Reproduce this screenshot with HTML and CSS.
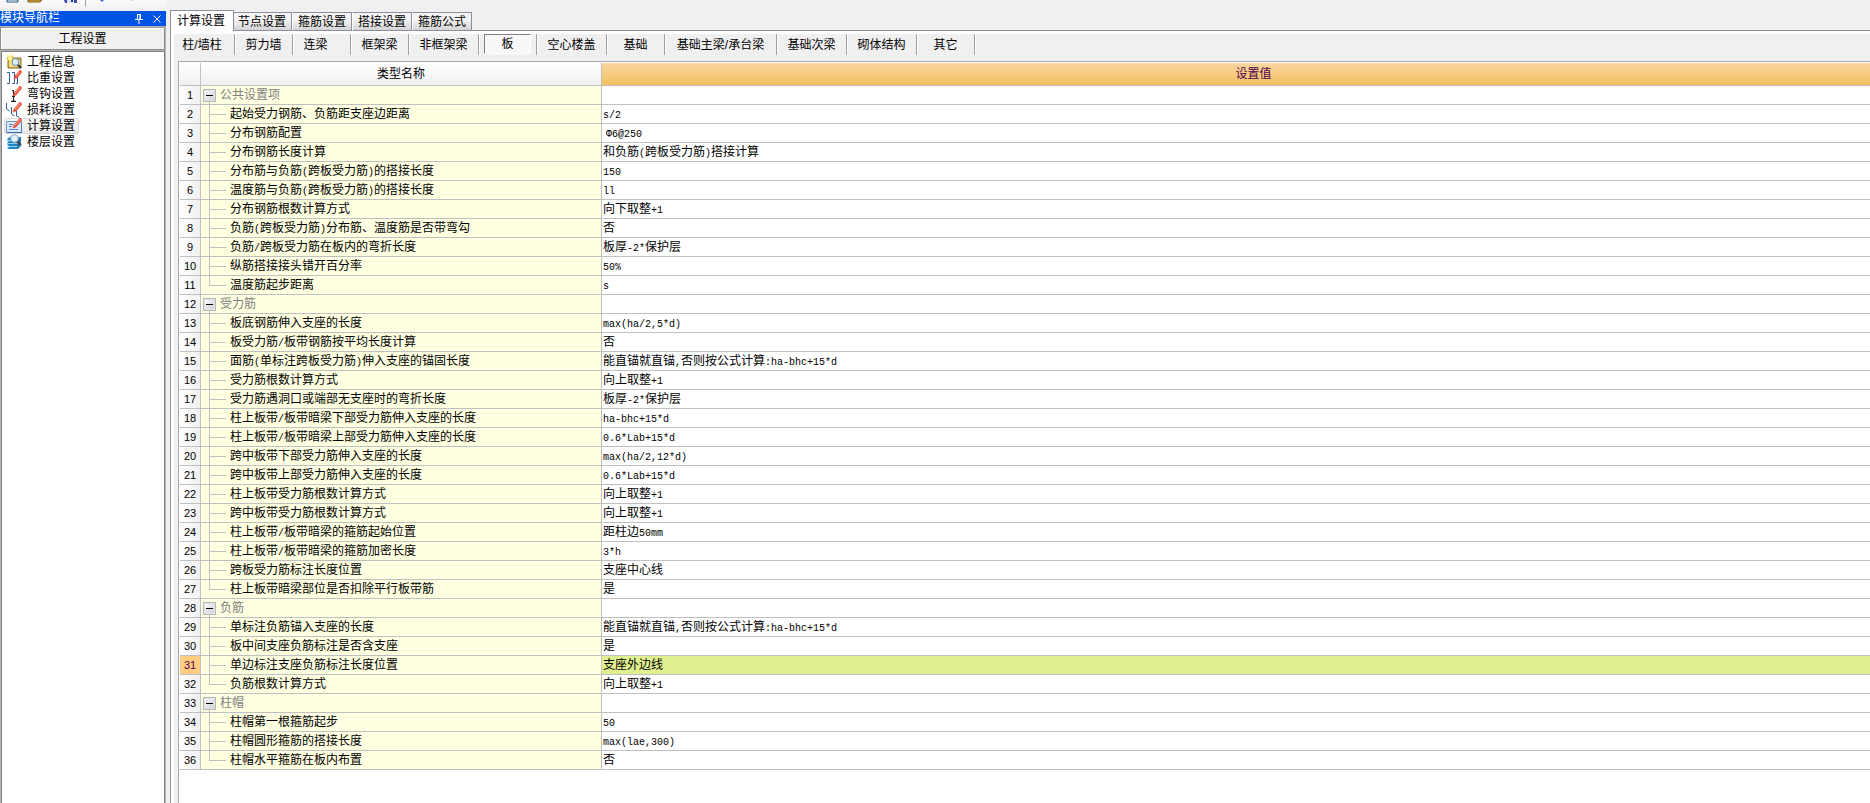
FILE: index.html
```html
<!DOCTYPE html>
<html lang="zh-CN">
<head>
<meta charset="utf-8">
<title>工程设置</title>
<link rel="stylesheet" href="styles.css">
</head>
<body>
<div class="app">
<aside class="side">
  <div class="toolbar">
    <svg class="strip" viewBox="0 0 166 8" aria-hidden="true">
      <path d="M7 0v2h11V0z" fill="#fff" stroke="#31577f"/><path d="M9 0h7v1H9z" fill="#9cc4dc"/>
      <path d="M28 0h12l2 0-2 2H28z" fill="#e8b640" stroke="#7a5a14"/>
      <path d="M64 0h13v3H65z" fill="#3d4fae"/><path d="M67 0h7v3h-7z" fill="#dfe4f6"/><path d="M71 0h2v2h-2z" fill="#27338a"/>
      <path d="M85.500 0v6.500" stroke="#a0a0a0"/>
      <path d="M100 0h4l-2 2z" fill="#3a6bd8"/><path d="M131 0h3l-1 1z" fill="#c4c4c8"/>
    </svg>
  </div>
  <header class="side-title">
    <h1>模块导航栏</h1>
    <button class="tbtn" aria-label="固定"><svg viewBox="0 0 8 10"><path d="M2 .5h4M2.500 0v5M5.500 0v5M4.800 0v5M0 5.500h8M4 6v4" stroke="#fff" fill="none"/></svg></button>
    <button class="tbtn" aria-label="关闭"><svg viewBox="0 0 8 8"><path d="M.5.5l7 7M7.500.5l-7 7" stroke="#fff" fill="none"/></svg></button>
  </header>
  <div class="side-body">
    <button class="group">工程设置</button>
    <nav class="list">
      <a class="item" href="#"><svg viewBox="0 0 16 16"><path d="M2 3h5l1 1h7v10H2z" fill="#e3b84f" stroke="#8d6a1e"/><path d="M3 6h11v7H3z" fill="#f7dc8a"/><path d="M4 0v9M0 4h9M1 1l6 6M7 1L1 7" stroke="#ffe14a"/><circle cx="4" cy="4" r="2" fill="#fff6a8"/><path d="M11 10l4 4" stroke="#30343c" stroke-width="2"/><circle cx="9.500" cy="8" r="3.500" fill="#d9edfb" stroke="#6989aa"/></svg>工程信息</a>
      <a class="item" href="#"><svg viewBox="0 0 16 16"><path d="M1 2.500h2.500v11H1M6 2.500h2.500v11H6M11.500 6v7.500H10" stroke="#315a9b" fill="none"/><path d="M9 6l5-6 2 2-5 6-3 1z" fill="#f2573f" stroke="#d43a28" stroke-width=".5"/><path d="M10 6l4-4.500" stroke="#ffad91"/></svg>比重设置</a>
      <a class="item" href="#"><svg viewBox="0 0 16 16"><path d="M6 4.500h2M7.500 5v10M5 15.300h5M6 10.500h3" stroke="#20232b" stroke-width="1.200" fill="none"/><path d="M8 7l6-7 2 2-6 7-3 1z" fill="#f2573f" stroke="#d43a28" stroke-width=".5"/><path d="M9 7l5-5.500" stroke="#ffad91"/></svg>弯钩设置</a>
      <a class="item" href="#"><svg viewBox="0 0 16 16"><path d="M.5 1v6l3 2M5.500 5v7l3 2M10.500 9v5l3 1.500" stroke="#315a9b" fill="none"/><path d="M8 7l6-7 2 2-6 7-3 1z" fill="#f2573f" stroke="#d43a28" stroke-width=".5"/><path d="M9 7l5-5.500" stroke="#ffad91"/></svg>损耗设置</a>
      <a class="item current" href="#" aria-current="page"><svg viewBox="0 0 16 16"><path d="M.5 3.500h15v11H.5z" fill="#d9e8fa" stroke="#6f98cc"/><path d="M1 14.500h15V5" stroke="#3467aa" fill="none"/><path d="M3 6.500h4M3 8.500h3M3 11.500h9" stroke="#5b87bd"/><path d="M8 7l6-7 2 2-6 7-3 1z" fill="#f2573f" stroke="#d43a28" stroke-width=".5"/><path d="M9 7l5-5.500" stroke="#ffad91"/></svg>计算设置</a>
      <a class="item" href="#"><svg viewBox="0 0 16 16"><path d="M1 5l3-2h11v9l-3 3H1l2-2H1l2-2H1l2-2H1l2-2z" fill="#2384c4"/><path d="M1 6.500h11M1 9.500h11M1 12.500h11" stroke="#8ed0f0"/><path d="M12 14V7l3-2" stroke="#145b91" fill="none"/><path d="M11 7l4 4" stroke="#4a3b35" stroke-width="2"/><circle cx="8.500" cy="4.500" r="3.800" fill="#e2f0f8" stroke="#8ba7b8"/></svg>楼层设置</a>
    </nav>
  </div>
</aside>
<main class="main">
  <div class="tabs" role="tablist">
    <button class="tab active" role="tab" aria-selected="true">计算设置</button>
    <button class="tab" role="tab">节点设置</button>
    <button class="tab" role="tab">箍筋设置</button>
    <button class="tab" role="tab">搭接设置</button>
    <button class="tab" role="tab">箍筋公式</button>
  </div>
  <div class="page">
    <div class="cats">
      <div class="cat"><button>柱/墙柱</button></div>
      <div class="cat"><button>剪力墙</button></div>
      <div class="cat"><button class="lead">连梁</button></div>
      <div class="cat"><button>框架梁</button></div>
      <div class="cat wide"><button>非框架梁</button></div>
      <div class="cat"><button class="pressed" aria-pressed="true">板</button></div>
      <div class="cat wide"><button>空心楼盖</button></div>
      <div class="cat"><button>基础</button></div>
      <div class="cat xwide"><button>基础主梁/承台梁</button></div>
      <div class="cat wide"><button>基础次梁</button></div>
      <div class="cat wide"><button>砌体结构</button></div>
      <div class="cat"><button>其它</button></div>
    </div>
    <div class="grid">
      <table>
        <colgroup><col class="c-num"><col class="c-name"><col></colgroup>
        <thead><tr><th></th><th>类型名称</th><th class="sel">设置值</th></tr></thead>
        <tbody>
          <tr class="sec"><th>1</th><td><button class="fold" aria-label="折叠"></button>公共设置项</td><td></td></tr>
          <tr><th>2</th><td>起始受力钢筋、负筋距支座边距离</td><td><code>s/2</code></td></tr>
          <tr><th>3</th><td>分布钢筋配置</td><td class="bar"><code>Φ6@250</code></td></tr>
          <tr><th>4</th><td>分布钢筋长度计算</td><td>和负筋<code>(</code>跨板受力筋<code>)</code>搭接计算</td></tr>
          <tr><th>5</th><td>分布筋与负筋<code>(</code>跨板受力筋<code>)</code>的搭接长度</td><td><code>150</code></td></tr>
          <tr><th>6</th><td>温度筋与负筋<code>(</code>跨板受力筋<code>)</code>的搭接长度</td><td><code>ll</code></td></tr>
          <tr><th>7</th><td>分布钢筋根数计算方式</td><td>向下取整<code>+1</code></td></tr>
          <tr><th>8</th><td>负筋<code>(</code>跨板受力筋<code>)</code>分布筋、温度筋是否带弯勾</td><td>否</td></tr>
          <tr><th>9</th><td>负筋<code>/</code>跨板受力筋在板内的弯折长度</td><td>板厚<code>-2*</code>保护层</td></tr>
          <tr><th>10</th><td>纵筋搭接接头错开百分率</td><td><code>50%</code></td></tr>
          <tr class="last"><th>11</th><td>温度筋起步距离</td><td><code>s</code></td></tr>
          <tr class="sec"><th>12</th><td><button class="fold" aria-label="折叠"></button>受力筋</td><td></td></tr>
          <tr><th>13</th><td>板底钢筋伸入支座的长度</td><td><code>max(ha/2,5*d)</code></td></tr>
          <tr><th>14</th><td>板受力筋<code>/</code>板带钢筋按平均长度计算</td><td>否</td></tr>
          <tr><th>15</th><td>面筋<code>(</code>单标注跨板受力筋<code>)</code>伸入支座的锚固长度</td><td>能直锚就直锚<code>,</code>否则按公式计算<code>:ha-bhc+15*d</code></td></tr>
          <tr><th>16</th><td>受力筋根数计算方式</td><td>向上取整<code>+1</code></td></tr>
          <tr><th>17</th><td>受力筋遇洞口或端部无支座时的弯折长度</td><td>板厚<code>-2*</code>保护层</td></tr>
          <tr><th>18</th><td>柱上板带<code>/</code>板带暗梁下部受力筋伸入支座的长度</td><td><code>ha-bhc+15*d</code></td></tr>
          <tr><th>19</th><td>柱上板带<code>/</code>板带暗梁上部受力筋伸入支座的长度</td><td><code>0.6*Lab+15*d</code></td></tr>
          <tr><th>20</th><td>跨中板带下部受力筋伸入支座的长度</td><td><code>max(ha/2,12*d)</code></td></tr>
          <tr><th>21</th><td>跨中板带上部受力筋伸入支座的长度</td><td><code>0.6*Lab+15*d</code></td></tr>
          <tr><th>22</th><td>柱上板带受力筋根数计算方式</td><td>向上取整<code>+1</code></td></tr>
          <tr><th>23</th><td>跨中板带受力筋根数计算方式</td><td>向上取整<code>+1</code></td></tr>
          <tr><th>24</th><td>柱上板带<code>/</code>板带暗梁的箍筋起始位置</td><td>距柱边<code>50mm</code></td></tr>
          <tr><th>25</th><td>柱上板带<code>/</code>板带暗梁的箍筋加密长度</td><td><code>3*h</code></td></tr>
          <tr><th>26</th><td>跨板受力筋标注长度位置</td><td>支座中心线</td></tr>
          <tr class="last"><th>27</th><td>柱上板带暗梁部位是否扣除平行板带筋</td><td>是</td></tr>
          <tr class="sec"><th>28</th><td><button class="fold" aria-label="折叠"></button>负筋</td><td></td></tr>
          <tr><th>29</th><td>单标注负筋锚入支座的长度</td><td>能直锚就直锚<code>,</code>否则按公式计算<code>:ha-bhc+15*d</code></td></tr>
          <tr><th>30</th><td>板中间支座负筋标注是否含支座</td><td>是</td></tr>
          <tr class="picked"><th>31</th><td>单边标注支座负筋标注长度位置</td><td>支座外边线</td></tr>
          <tr class="last"><th>32</th><td>负筋根数计算方式</td><td>向上取整<code>+1</code></td></tr>
          <tr class="sec"><th>33</th><td><button class="fold" aria-label="折叠"></button>柱帽</td><td></td></tr>
          <tr><th>34</th><td>柱帽第一根箍筋起步</td><td><code>50</code></td></tr>
          <tr><th>35</th><td>柱帽圆形箍筋的搭接长度</td><td><code>max(lae,300)</code></td></tr>
          <tr class="last"><th>36</th><td>柱帽水平箍筋在板内布置</td><td>否</td></tr>
        </tbody>
      </table>
    </div>
  </div>
</main>
</div>
</body>
</html>
```
FILE: styles.css
```css
* { box-sizing: border-box; }
body {
  margin: 0;
  background: #f0f0f0;
  color: #000;
  font: 12px/16px "Liberation Sans", "Noto Sans CJK SC", sans-serif;
  overflow: hidden;
}
button {
  margin: 0;
  padding: 0;
  border: 0;
  background: none;
  color: inherit;
  font: inherit;
}
.app { display: flex; gap: 4px; height: 100vh; }

/* navigation panel */
.side { display: flex; flex-direction: column; width: 166px; flex: none; }
.toolbar { height: 11px; background: linear-gradient(#fafafa, #f0f0f0); }
.strip { display: block; width: 166px; height: 8px; }
.side-title {
  display: flex;
  align-items: center;
  gap: 10px;
  height: 15px;
  padding-right: 5px;
  background: #0054e3;
  color: #fff;
}
.side-title h1 { flex: 1; margin: 0; font-size: 12px; line-height: 15px; font-weight: 400; }
.tbtn { display: flex; width: 8px; }
.tbtn svg { width: 8px; height: auto; }
.side-body {
  display: flex;
  flex: 1;
  flex-direction: column;
  gap: 1px;
  padding: 1px 1px 0 0;
  background: #b4b4b4;
}
.group {
  height: 23px;
  border: 1px solid #8c8c8c;
  border-top-color: #a0a0a0;
  background: #f0f0f0;
  box-shadow: inset 1px 1px #fff;
}
.list {
  flex: 1;
  margin-left: 1px;
  padding: 2px;
  border: solid #808080;
  border-width: 1px 1px 0;
  background: #fff;
}
.item {
  display: flex;
  align-items: center;
  gap: 5px;
  width: 75px;
  height: 16px;
  padding-left: 2px;
  border-radius: 3px;
  color: #000;
  text-decoration: none;
  white-space: nowrap;
}
.item svg { width: 16px; height: 16px; flex: none; }
.item.current {
  background: linear-gradient(#fafafa, #e6e6e6);
  box-shadow: inset 0 0 0 1px #d9d9d9;
}

/* tabs */
.main { display: flex; flex: 1; flex-direction: column; min-width: 0; }
.tabs {
  display: flex;
  align-items: flex-end;
  height: 31px;
  flex: none;
  box-shadow: inset 0 -1px #8e8e9c;
}
.tab {
  width: 60px;
  height: 19px;
  border: 1px solid #8e8e9c;
  border-left-color: #fff;
  background: linear-gradient(#f4f4f4 40%, #d4d4d4);
}
.tab.active {
  position: relative;
  width: 64px;
  height: 21px;
  margin-right: -2px;
  padding-right: 2px;
  border-color: #8e8e9c;
  border-bottom: 0;
  background: #fff;
}
.page {
  display: flex;
  flex: 1;
  flex-direction: column;
  padding: 3px 0 0 3px;
  border-left: 1px solid #8e8e9c;
  background: linear-gradient(#fff 3px, transparent 3px), linear-gradient(90deg, #fff 3px, transparent 3px);
}

/* member categories */
.cats { display: flex; height: 21px; flex: none; margin-bottom: 6px; }
.cat {
  display: flex;
  width: 58px;
  padding: 0 5px;
  border-right: 1px solid #a0a0a0;
  box-shadow: 1px 0 #fff;
}
.cat:first-child { width: 61px; padding: 0 8px 0 4px; }
.cat.wide { width: 70px; }
.cat.xwide { width: 112px; }
.cat button { flex: 1; white-space: nowrap; }
.cat .lead { padding-right: 12px; }
.cat .pressed {
  margin-bottom: 1px;
  border: 1px solid;
  border-color: #808080 #fff #fff #808080;
  background: repeating-conic-gradient(#f0f0f0 0 25%, #fff 0 50%) 0 0 / 2px 2px;
}

/* settings table */
.grid {
  flex: 1;
  margin-left: 4px;
  padding: 1px 0 0 1px;
  border: solid #a8a8a8;
  border-width: 1px 0 0 1px;
  background: #fff;
  overflow: hidden;
}
table {
  width: calc(100% + 36px);
  table-layout: fixed;
  border-collapse: separate;
  border-spacing: 0;
}
.c-num { width: 21px; }
.c-name { width: 401px; }
th, td {
  height: 19px;
  padding: 0;
  border: solid #c0c0c0;
  border-width: 0 1px 1px 0;
  font-weight: 400;
  line-height: 18px;
  text-align: left;
  white-space: nowrap;
}
thead th {
  height: 23px;
  background: linear-gradient(#fff, #f0f0f0);
  text-align: center;
}
thead .sel { background: linear-gradient(#fad7a0, #f1c05e); color: #500050; }
tbody th {
  background: linear-gradient(90deg, #fff, #f0f0f0);
  font-size: 11px;
  text-align: center;
}
td:nth-child(2) {
  padding-left: 29px;
  background:
    linear-gradient(#c0c0c0, #c0c0c0) 8px 0 / 1px 100% no-repeat,
    linear-gradient(#c0c0c0, #c0c0c0) 8px 9px / 17px 1px no-repeat,
    #ffffe1;
}
.last td:nth-child(2) {
  background:
    linear-gradient(#c0c0c0, #c0c0c0) 8px 0 / 1px 9px no-repeat,
    linear-gradient(#c0c0c0, #c0c0c0) 8px 9px / 17px 1px no-repeat,
    #ffffe1;
}
.sec td:nth-child(2) {
  padding-left: 2px;
  background: linear-gradient(#c0c0c0, #c0c0c0) 8px 100% / 1px 3px no-repeat, #ffffe1;
  color: #808080;
}
td:nth-child(3) { padding-left: 1px; }
td.bar:nth-child(3) { padding-left: 4px; }
.picked th { background: #ffcc80; color: #500050; }
.picked td:nth-child(3) { background: #e1f08f; }
.fold {
  width: 13px;
  height: 13px;
  margin-right: 4px;
  border: 1px solid #b8b8b8;
  background: linear-gradient(#000, #000) center / 7px 1px no-repeat, linear-gradient(135deg, #fff, #c8ccd4);
  box-shadow: inset 0 0 0 1px #e4e4e4;
  vertical-align: middle;
}
code { font: 10px/10px "Liberation Mono", monospace; }
```
